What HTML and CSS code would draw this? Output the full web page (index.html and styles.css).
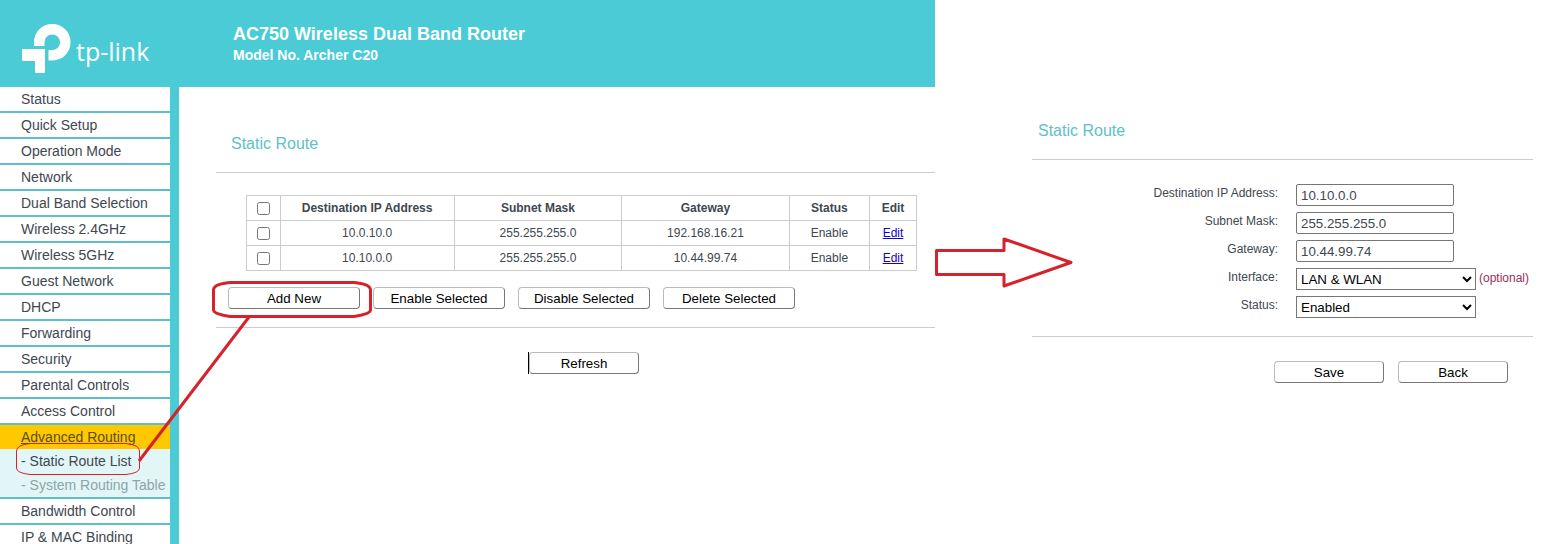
FILE: index.html
```html
<!DOCTYPE html>
<html lang="en">
<head>
<meta charset="utf-8">
<meta name="viewport" content="width=device-width, initial-scale=1">
<title>Static Route</title>
<link rel="stylesheet" href="styles.css">
</head>
<body>
<div class="page">
  <section class="router">
    <header class="banner">
      <div class="brand">
        <svg class="brand-mark" width="50" height="50" viewBox="22 24 50 50" aria-hidden="true">
          <path fill="#fff" d="M34 46V42.300A18.300 18.300 0 1 1 52.300 60.500H48.500V50H52.300A7.800 7.800 0 1 0 44.500 42.300V46Z"/>
          <path fill="#fff" d="M22 49H45V72Q45 73 44 73H36Q35 73 35 72V61H23.500Q22 61 22 59.500Z"/>
        </svg>
        <span class="brand-name">tp-link</span>
      </div>
      <div class="model">
        <h1 class="model-name">AC750 Wireless Dual Band Router</h1>
        <p class="model-number">Model No. Archer C20</p>
      </div>
    </header>
    <div class="workspace">
      <nav class="menu">
        <a class="menu-item" href="#">Status</a>
        <a class="menu-item" href="#">Quick Setup</a>
        <a class="menu-item" href="#">Operation Mode</a>
        <a class="menu-item" href="#">Network</a>
        <a class="menu-item" href="#">Dual Band Selection</a>
        <a class="menu-item" href="#">Wireless 2.4GHz</a>
        <a class="menu-item" href="#">Wireless 5GHz</a>
        <a class="menu-item" href="#">Guest Network</a>
        <a class="menu-item" href="#">DHCP</a>
        <a class="menu-item" href="#">Forwarding</a>
        <a class="menu-item" href="#">Security</a>
        <a class="menu-item" href="#">Parental Controls</a>
        <a class="menu-item" href="#">Access Control</a>
        <a class="menu-item menu-open" href="#">Advanced Routing</a>
        <div class="submenu">
          <a class="submenu-item" href="#">- Static Route List</a>
          <a class="submenu-item submenu-muted" href="#">- System Routing Table</a>
        </div>
        <a class="menu-item" href="#">Bandwidth Control</a>
        <a class="menu-item" href="#">IP &amp; MAC Binding</a>
      </nav>
      <main class="content">
        <h2 class="panel-title">Static Route</h2>
        <div class="list-body">
          <table class="routes">
            <colgroup>
              <col class="col-check"><col class="col-dest"><col class="col-mask"><col class="col-gate"><col class="col-status"><col class="col-edit">
            </colgroup>
            <thead>
              <tr>
                <th><input class="check" type="checkbox" aria-label="Select all routes"></th>
                <th>Destination IP Address</th><th>Subnet Mask</th><th>Gateway</th><th>Status</th><th>Edit</th>
              </tr>
            </thead>
            <tbody>
              <tr>
                <td><input class="check" type="checkbox" aria-label="Select 10.0.10.0"></td>
                <td>10.0.10.0</td><td>255.255.255.0</td><td>192.168.16.21</td><td>Enable</td><td><a class="edit" href="#">Edit</a></td>
              </tr>
              <tr>
                <td><input class="check" type="checkbox" aria-label="Select 10.10.0.0"></td>
                <td>10.10.0.0</td><td>255.255.255.0</td><td>10.44.99.74</td><td>Enable</td><td><a class="edit" href="#">Edit</a></td>
              </tr>
            </tbody>
          </table>
          <div class="actions">
            <button class="button button-wide" type="button">Add New</button>
            <button class="button button-wide" type="button">Enable Selected</button>
            <button class="button button-wide" type="button">Disable Selected</button>
            <button class="button button-wide" type="button">Delete Selected</button>
          </div>
        </div>
        <div class="refresh-row">
          <div class="caret-edge"><button class="button" type="button">Refresh</button></div>
        </div>
      </main>
    </div>
  </section>

  <section class="editor">
    <h2 class="panel-title">Static Route</h2>
    <form class="route-form">
      <label class="label" for="dest">Destination IP Address:</label>
      <div class="control"><input class="field" id="dest" type="text" value="10.10.0.0"></div>
      <label class="label" for="mask">Subnet Mask:</label>
      <div class="control"><input class="field" id="mask" type="text" value="255.255.255.0"></div>
      <label class="label" for="gateway">Gateway:</label>
      <div class="control"><input class="field" id="gateway" type="text" value="10.44.99.74"></div>
      <label class="label" for="interface">Interface:</label>
      <div class="control">
        <select class="choice" id="interface"><option>LAN &amp; WLAN</option></select>
        <span class="optional">(optional)</span>
      </div>
      <label class="label" for="status">Status:</label>
      <div class="control"><select class="choice" id="status"><option>Enabled</option></select></div>
    </form>
    <div class="form-actions">
      <button class="button" type="button">Save</button>
      <button class="button" type="button">Back</button>
    </div>
  </section>

  <svg class="annotations" width="1100" height="500" viewBox="0 0 1100 500" aria-hidden="true">
    <g fill="none" stroke="#d6222b">
      <path d="M230 282.500H354Q370.500 284 370.500 290V310Q370.500 314 354 316.500H230Q213.500 314 213.500 310V290Q213.500 284 230 282.500Z" stroke-width="3"/>
      <path d="M30 443.500H126Q139.500 445 139.500 451V468Q139.500 473 126 474.500H30Q16.500 473 16.500 468V451Q16.500 445 30 443.500Z"/>
      <path d="M139 461L249 317" stroke-width="3"/>
      <path d="M936.500 250.500H1004V239L1071 262.500L1004 286V274.500H936.500Z" stroke-width="3" stroke-linejoin="round"/>
    </g>
  </svg>
</div>
</body>
</html>
```
FILE: styles.css
```css
* {
  box-sizing: border-box;
}

body {
  margin: 0;
  background: #fff;
  color: #40474f;
  font-family: "Liberation Sans", Arial, sans-serif;
  font-size: 12px;
}

.page {
  position: relative;
  display: grid;
  grid-template-columns: minmax(0, 935fr) minmax(0, 608fr);
  height: 100vh;
  overflow: hidden;
}

.banner {
  display: flex;
  height: 87px;
  background: #4acbd6;
  color: #fff;
}

.brand {
  display: flex;
  flex: none;
  align-items: flex-start;
  gap: 4px;
  width: 233px;
  padding: 24px 0 0 22px;
}

.brand-name {
  padding-top: 11px;
  font-family: "Open Sans", sans-serif;
  font-size: 25px;
  font-weight: 500;
  line-height: 32px;
}

.model {
  padding-top: 23px;
}

.model-name {
  margin: 0;
  font-size: 18px;
  line-height: 22px;
}

.model-number {
  margin: 0;
  font-size: 14px;
  font-weight: bold;
  line-height: 20px;
}

.workspace {
  display: flex;
}

.menu {
  flex: none;
  width: 179px;
  border-right: 9px solid #4acbd6;
  font-size: 14px;
  line-height: 24px;
}

.menu-item,
.submenu-item {
  display: block;
  padding-left: 21px;
  color: #40474f;
  text-decoration: none;
  white-space: nowrap;
}

.menu-item {
  border-bottom: 2px solid #5fbfc9;
}

.menu-open {
  border-bottom: 0;
  background: #ffc800;
  color: #5a4f1c;
  text-decoration: underline;
}

.submenu {
  border-bottom: 2px solid #5fbfc9;
  background: #e2f6f8;
}

.submenu-muted {
  color: #8ba5a9;
}

.content {
  flex: 1;
  padding: 42px 0 0 37px;
}

.panel-title {
  margin: 0;
  border-bottom: 1px solid #ccc;
  color: #60c0c9;
  font-size: 16px;
  font-weight: normal;
  line-height: 30px;
}

.content .panel-title {
  padding: 0 15px 13px;
}

.list-body {
  padding: 22px 18px 18px 12px;
  border-bottom: 1px solid #ccc;
}

.routes {
  width: calc(100% - 18px);
  margin-left: 18px;
  border-collapse: collapse;
  table-layout: fixed;
  text-align: center;
}

.routes th,
.routes td {
  height: 25px;
  padding: 0;
  border: 1px solid #ccc;
  line-height: 16px;
}

.col-check { width: 5%; }
.col-dest { width: 26%; }
.col-mask { width: 25%; }
.col-gate { width: 25%; }
.col-status { width: 12%; }
.col-edit { width: 7%; }

.check {
  display: block;
  margin: 1px auto 0;
}

.edit {
  color: #1400c8;
}

.actions {
  display: flex;
  gap: 13px;
  padding-top: 16px;
}

.button {
  width: 110px;
  height: 22px;
  padding: 0;
  border: 1px solid;
  border-color: #bbb #777 #777 #bbb;
  border-radius: 4px;
  background: #fff;
  color: #000;
  font-family: inherit;
}

.button-wide {
  width: 132px;
}

.refresh-row {
  display: flex;
  justify-content: center;
  padding: 24px 0 0 16px;
}

.caret-edge {
  display: flex;
  border-left: 1px solid #000;
}

.editor {
  padding: 116px 10px 0 97px;
}

.editor .panel-title {
  padding: 0 6px 13px;
}

.route-form {
  display: grid;
  grid-template-columns: 1fr 237px;
  gap: 6px 18px;
  padding: 24px 0 18px;
  border-bottom: 1px solid #ccc;
}

.label {
  line-height: 18px;
  text-align: right;
}

.control {
  display: flex;
  gap: 3px;
  height: 22px;
}

.field {
  width: 158px;
  padding: 1px 4px;
  border: 1px solid #767676;
  border-radius: 2px;
  color: #40474f;
  font-family: inherit;
}

.choice {
  width: 180px;
  padding: 0;
  border: 1px solid #767676;
  border-radius: 0;
  background-color: #fff;
  color: #000;
  font-family: inherit;
}

.optional {
  color: #a02c5a;
  line-height: 20px;
}

.form-actions {
  display: flex;
  justify-content: flex-end;
  gap: 14px;
  padding: 24px 25px 0 0;
}

.annotations {
  position: absolute;
  top: 0;
  left: 0;
  pointer-events: none;
}
```
